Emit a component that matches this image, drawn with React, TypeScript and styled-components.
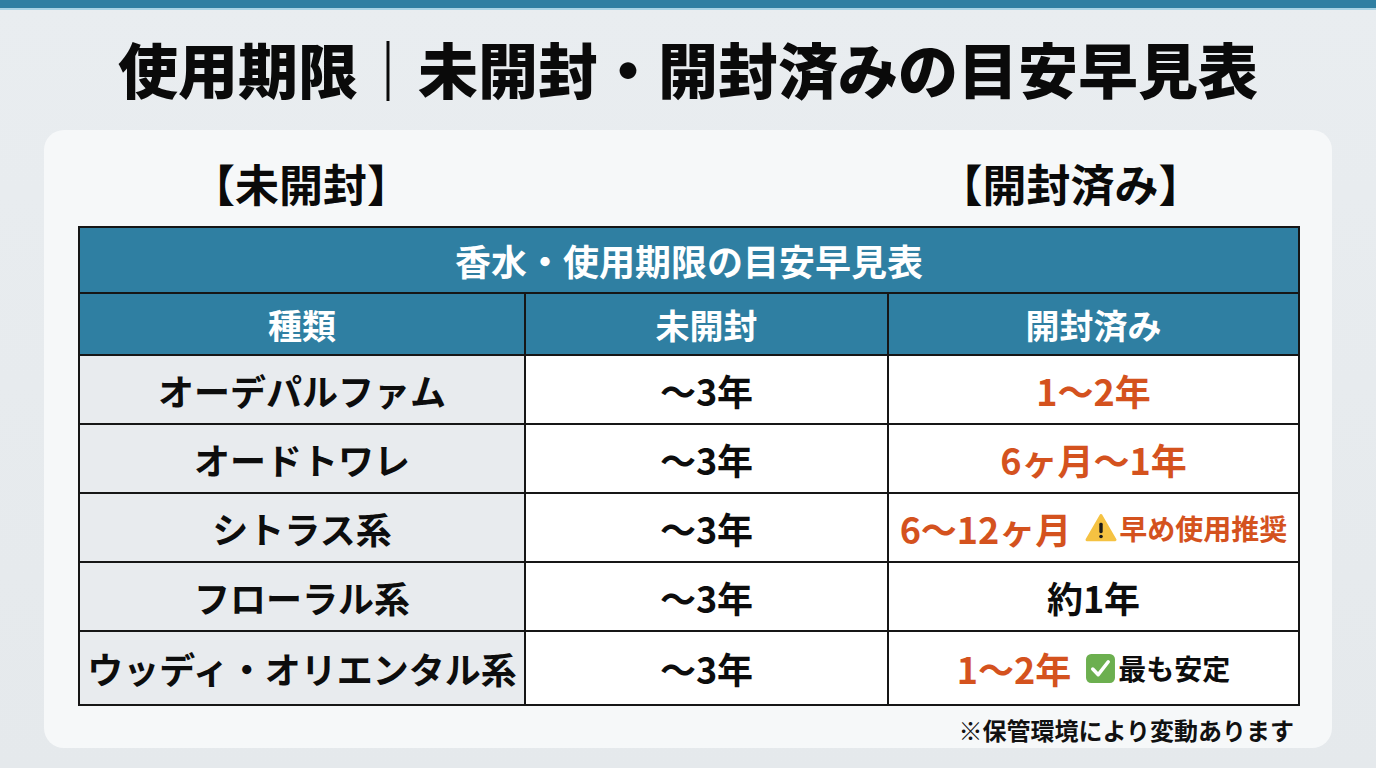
import React from "react";
import styled, { createGlobalStyle } from "styled-components";

const GlobalStyle = createGlobalStyle`
  html, body {
    margin: 0;
    padding: 0;
  }
  body {
    background: #e7ebee;
    font-family: "Noto Sans CJK JP", "Noto Sans", sans-serif;
  }
`;

const Page = styled.div`
  width: 1376px;
  height: 768px;
  display: flex;
  flex-direction: column;
  align-items: center;
  background: linear-gradient(180deg, #e9edf0 0%, #e5e9ec 100%);
  overflow: hidden;
`;

const TopBar = styled.div`
  width: 100%;
  height: 8px;
  background: #2f7fa2;
  border-bottom: 2px solid #a9d3e4;
`;

const Title = styled.h1`
  margin: 0;
  height: 120px;
  display: flex;
  align-items: center;
  font-size: 60px;
  font-weight: 900;
  color: #0a0a0a;
  letter-spacing: 0;
  line-height: 1;
  padding-bottom: 4px;
  box-sizing: border-box;
`;

const Card = styled.div`
  width: 1288px;
  box-sizing: border-box;
  background: #f6f8f9;
  border-radius: 20px;
  padding: 10px 34px 6px;
  display: flex;
  flex-direction: column;
`;

const COLS = "446px 363px 411px";

const LabelRow = styled.div`
  display: grid;
  grid-template-columns: ${COLS};
  height: 86px;
  align-items: center;
`;

const SideLabel = styled.div<{ $col: number; $shift?: number }>`
  grid-column: ${({ $col }) => $col};
  text-align: center;
  font-size: 44px;
  font-weight: 700;
  color: #0a0a0a;
  line-height: 1;
  margin-right: ${({ $shift }) => $shift ?? 0}px;
`;

const Table = styled.table`
  width: 1220px;
  border-collapse: collapse;
  table-layout: fixed;
  border: 2px solid #161616;
`;

const TitleCell = styled.th`
  height: 64px;
  background: #2f7fa2;
  color: #ffffff;
  font-size: 36px;
  font-weight: 700;
  text-align: center;
  border: 2px solid #161616;
  padding: 0;
`;

const HeadCell = styled.th`
  height: 60px;
  background: #2f7fa2;
  color: #ffffff;
  font-size: 34px;
  font-weight: 700;
  text-align: center;
  border: 2px solid #161616;
  padding: 0;
`;

const Cell = styled.td<{
  $kind?: boolean;
  $tone?: "orange" | "black";
  $tall?: boolean;
}>`
  height: ${({ $tall }) => ($tall ? 72 : 67)}px;
  background: ${({ $kind }) => ($kind ? "#e8ebee" : "#ffffff")};
  color: ${({ $tone }) => ($tone === "orange" ? "#d4521e" : "#0d0d0d")};
  font-size: 36px;
  font-weight: 700;
  text-align: center;
  border: 2px solid #161616;
  padding: 0;
  white-space: nowrap;
`;

const CellInner = styled.div`
  display: flex;
  align-items: center;
  justify-content: center;
  gap: 14px;
`;

const Note = styled.span<{ $tone: "orange" | "black" }>`
  display: inline-flex;
  align-items: center;
  gap: 2px;
  font-size: 28px;
  font-weight: 700;
  color: ${({ $tone }) => ($tone === "orange" ? "#d4521e" : "#0d0d0d")};
`;

const Footnote = styled.div`
  text-align: right;
  font-size: 24px;
  font-weight: 700;
  color: #111111;
  padding: 6px 4px 0 0;
  height: 36px;
  box-sizing: border-box;
`;

function WarnIcon() {
  return (
    <svg width="32" height="30" viewBox="0 0 30 28">
      <path
        d="M15 2.5 L28 25 L2 25 Z"
        fill="#f5c242"
        stroke="#f5c242"
        strokeWidth="3"
        strokeLinejoin="round"
      />
      <rect x="13.4" y="9" width="3.2" height="10" rx="1.4" fill="#1a1a1a" />
      <circle cx="15" cy="22" r="1.7" fill="#1a1a1a" />
    </svg>
  );
}

function CheckIcon() {
  return (
    <svg width="31" height="31" viewBox="0 0 30 30">
      <rect x="1" y="1" width="28" height="28" rx="5" fill="#6caf4f" />
      <path
        d="M7.5 15.5 L12.8 21 L22.5 8.5"
        fill="none"
        stroke="#ffffff"
        strokeWidth="3.4"
        strokeLinecap="round"
        strokeLinejoin="round"
      />
    </svg>
  );
}

type Row = {
  kind: string;
  sealed: string;
  opened: string;
  tone: "orange" | "black";
  note?: { text: string; icon: "warn" | "check"; tone: "orange" | "black" };
};

const rows: Row[] = [
  { kind: "オーデパルファム", sealed: "〜3年", opened: "1〜2年", tone: "orange" },
  { kind: "オードトワレ", sealed: "〜3年", opened: "6ヶ月〜1年", tone: "orange" },
  {
    kind: "シトラス系",
    sealed: "〜3年",
    opened: "6〜12ヶ月",
    tone: "orange",
    note: { text: "早め使用推奨", icon: "warn", tone: "orange" },
  },
  { kind: "フローラル系", sealed: "〜3年", opened: "約1年", tone: "black" },
  {
    kind: "ウッディ・オリエンタル系",
    sealed: "〜3年",
    opened: "1〜2年",
    tone: "orange",
    note: { text: "最も安定", icon: "check", tone: "black" },
  },
];

export default function App() {
  return (
    <>
      <GlobalStyle />
      <Page>
        <TopBar />
        <Title>使用期限｜未開封・開封済みの目安早見表</Title>
        <Card>
          <LabelRow>
            <SideLabel $col={1}>【未開封】</SideLabel>
            <SideLabel $col={3} $shift={44}>
              【開封済み】
            </SideLabel>
          </LabelRow>
          <Table>
            <colgroup>
              <col style={{ width: 446 }} />
              <col style={{ width: 363 }} />
              <col style={{ width: 411 }} />
            </colgroup>
            <thead>
              <tr>
                <TitleCell colSpan={3}>香水・使用期限の目安早見表</TitleCell>
              </tr>
              <tr>
                <HeadCell>種類</HeadCell>
                <HeadCell>未開封</HeadCell>
                <HeadCell>開封済み</HeadCell>
              </tr>
            </thead>
            <tbody>
              {rows.map((r, i) => {
                const tall = i === rows.length - 1;
                return (
                  <tr key={i}>
                    <Cell $kind $tall={tall}>
                      {r.kind}
                    </Cell>
                    <Cell $tall={tall}>{r.sealed}</Cell>
                    <Cell $tone={r.tone} $tall={tall}>
                      <CellInner>
                        <span>{r.opened}</span>
                        {r.note && (
                          <Note $tone={r.note.tone}>
                            {r.note.icon === "warn" ? <WarnIcon /> : <CheckIcon />}
                            {r.note.text}
                          </Note>
                        )}
                      </CellInner>
                    </Cell>
                  </tr>
                );
              })}
            </tbody>
          </Table>
          <Footnote>※保管環境により変動あります</Footnote>
        </Card>
      </Page>
    </>
  );
}
